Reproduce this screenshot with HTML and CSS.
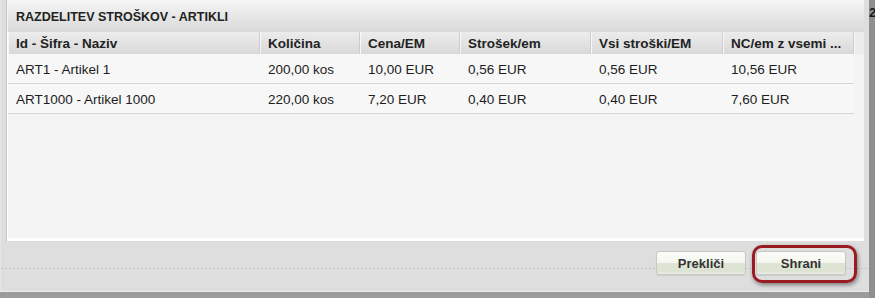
FILE: index.html
```html
<!DOCTYPE html>
<html lang="sl">
<head>
<meta charset="utf-8">
<title>Razdelitev stroškov - artikli</title>
<link rel="stylesheet" href="styles.css">
</head>
<body>
<div class="screen">
  <div class="dialog">
    <div class="main">
      <div class="titlebar">RAZDELITEV STROŠKOV - ARTIKLI</div>
      <div class="grid">
        <div class="grid-head">
          <div class="hcell">Id - Šifra - Naziv</div>
          <div class="hcell">Količina</div>
          <div class="hcell">Cena/EM</div>
          <div class="hcell">Strošek/em</div>
          <div class="hcell">Vsi stroški/EM</div>
          <div class="hcell">NC/em z vsemi ...</div>
          <div class="hfill"></div>
        </div>
        <div class="grid-row">
          <div class="cell">ART1 - Artikel 1</div>
          <div class="cell">200,00 kos</div>
          <div class="cell">10,00 EUR</div>
          <div class="cell">0,56 EUR</div>
          <div class="cell">0,56 EUR</div>
          <div class="cell">10,56 EUR</div>
        </div>
        <div class="grid-row">
          <div class="cell">ART1000 - Artikel 1000</div>
          <div class="cell">220,00 kos</div>
          <div class="cell">7,20 EUR</div>
          <div class="cell">0,40 EUR</div>
          <div class="cell">0,40 EUR</div>
          <div class="cell">7,60 EUR</div>
        </div>
        <div class="grid-body"></div>
      </div>
    </div>
    <div class="footer">
      <button class="btn" type="button">Prekliči</button>
      <div class="save-wrap">
        <button class="btn" type="button">Shrani</button>
        <span class="ring"></span>
      </div>
    </div>
  </div>
  <div class="side"><span class="side-num">2</span></div>
</div>
</body>
</html>
```

FILE: styles.css
```css
* { box-sizing: border-box; }

html, body {
  margin: 0;
  padding: 0;
}

body {
  font-family: "Liberation Sans", Arial, sans-serif;
  color: #1c1c22;
  background: #9b9b9b;
}

.screen {
  display: flex;
  width: 875px;
  height: 298px;
  background: #9b9b9b;
  overflow: hidden;
}

.dialog {
  width: 869px;
  height: 292px;
  flex: none;
  display: flex;
  flex-direction: column;
  background: #dedede;
  border-bottom: 1px solid #ebebeb;
  border-left: 1px solid #e6e6e6;
}

.main {
  margin-left: 5px;
  width: 858px;
  border-left: 1px solid #c6c6c6;
}

.titlebar {
  height: 32px;
  padding: 1px 0 0 8px;
  line-height: 31px;
  font-size: 12.5px;
  font-weight: bold;
  color: #222;
  border-left: 1px solid #f4f4f4;
  border-top: 1px solid #f6f6f6;
  background: linear-gradient(#f4f4f4, #d9d9d9);
}

.grid {
  height: 209px;
  display: flex;
  flex-direction: column;
  background: #f4f4f4;
  border-left: 1px solid #ffffff;
  border-bottom: 3px solid #ffffff;
}

.grid-head {
  display: grid;
  grid-template-columns: 252px 100px 100px 131px 132px 131px 1fr;
  height: 22px;
  flex: none;
}

.hcell {
  padding: 1px 0 0 7px;
  line-height: 21px;
  font-size: 13.5px;
  font-weight: bold;
  color: #222;
  white-space: nowrap;
  overflow: hidden;
  background: linear-gradient(#ececec, #d9d9d9);
  border-left: 1px solid #f7f7f7;
  border-right: 1px solid #cdcdcd;
}

.hfill {
  background: #ececec;
  border-left: 1px solid #f7f7f7;
}

.grid-row {
  display: grid;
  grid-template-columns: 252px 100px 100px 131px 132px 131px;
  height: 30px;
  flex: none;
}

.cell {
  padding: 3px 0 0 8px;
  line-height: 26px;
  font-size: 13.5px;
  white-space: nowrap;
  background: #f7f7f7;
  border-bottom: 1px solid #d6d6d6;
}

.grid-body {
  flex: 1;
}

.footer {
  flex: 1;
  display: flex;
  justify-content: flex-end;
  align-items: flex-start;
  gap: 10px;
  padding: 10px 23px 0 0;
  background:
    repeating-linear-gradient(to right, #c4c4c4 0 2px, transparent 2px 4px) 0 27px / 100% 1px no-repeat,
    #dedede;
}

.btn {
  width: 90px;
  height: 24px;
  padding: 0;
  font-family: "Liberation Sans", Arial, sans-serif;
  font-size: 13px;
  font-weight: bold;
  color: #333;
  border: 1px solid #c7c8c2;
  border-radius: 3px;
  background: linear-gradient(#fbfcf8 0%, #f4f6ef 48%, #dfe5d4 52%, #dde3d2 88%, #edf0e8 100%);
  box-shadow: 0 1px 1px rgba(0, 0, 0, 0.08);
}

.save-wrap {
  position: relative;
}

.ring {
  position: absolute;
  left: -4px;
  right: -11px;
  top: -6px;
  bottom: -8px;
  border: 3px solid #9a1a21;
  border-radius: 10px;
  box-shadow: 1px 2px 4px rgba(0, 0, 0, 0.45);
  pointer-events: none;
}

.side {
  flex: 1;
  display: flex;
  align-items: flex-start;
  padding-top: 6px;
  overflow: hidden;
  background: #8f8f8f;
  white-space: nowrap;
}

.side-num {
  font-size: 13px;
  font-weight: bold;
  color: #1a1a1a;
  line-height: 14px;
}
```
